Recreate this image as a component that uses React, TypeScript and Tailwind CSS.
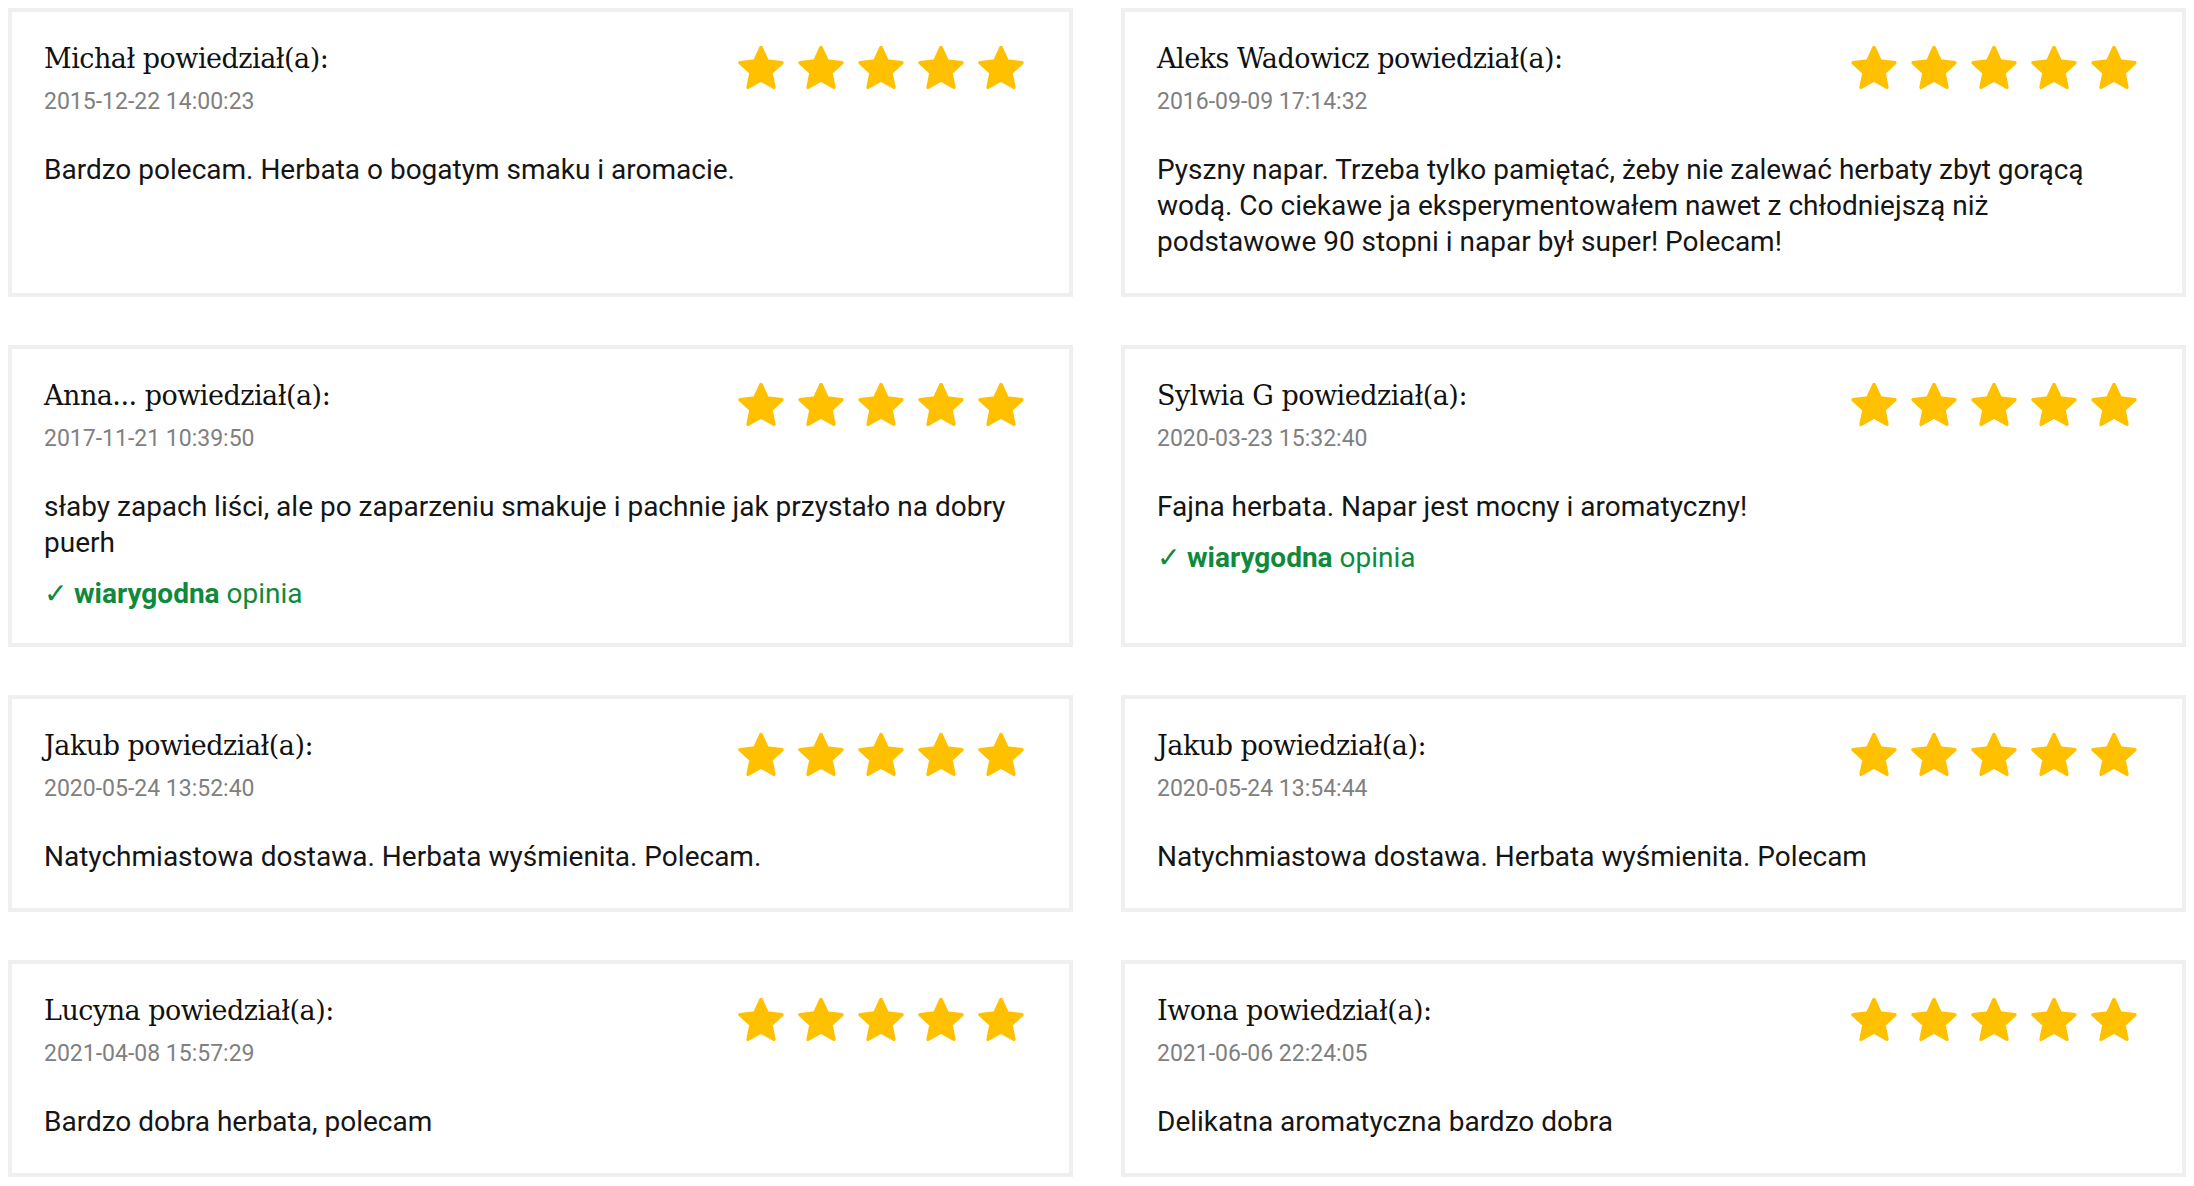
import React from "react";

type Review = {
  name: string;
  date: string;
  text: string;
  verified?: boolean;
};

const reviews: Review[] = [
  {
    name: "Michał",
    date: "2015-12-22 14:00:23",
    text: "Bardzo polecam. Herbata o bogatym smaku i aromacie.",
  },
  {
    name: "Aleks Wadowicz",
    date: "2016-09-09 17:14:32",
    text: "Pyszny napar. Trzeba tylko pamiętać, żeby nie zalewać herbaty zbyt gorącą wodą. Co ciekawe ja eksperymentowałem nawet z chłodniejszą niż podstawowe 90 stopni i napar był super! Polecam!",
  },
  {
    name: "Anna...",
    date: "2017-11-21 10:39:50",
    text: "słaby zapach liści, ale po zaparzeniu smakuje i pachnie jak przystało na dobry puerh",
    verified: true,
  },
  {
    name: "Sylwia G",
    date: "2020-03-23 15:32:40",
    text: "Fajna herbata. Napar jest mocny i aromatyczny!",
    verified: true,
  },
  {
    name: "Jakub",
    date: "2020-05-24 13:52:40",
    text: "Natychmiastowa dostawa. Herbata wyśmienita. Polecam.",
  },
  {
    name: "Jakub",
    date: "2020-05-24 13:54:44",
    text: "Natychmiastowa dostawa. Herbata wyśmienita. Polecam",
  },
  {
    name: "Lucyna",
    date: "2021-04-08 15:57:29",
    text: "Bardzo dobra herbata, polecam",
  },
  {
    name: "Iwona",
    date: "2021-06-06 22:24:05",
    text: "Delikatna aromatyczna bardzo dobra",
  },
];

// five-point star, rounded corners come from the round stroke join
const starPoints = Array.from({ length: 10 }, (_, i) => {
  const r = i % 2 === 0 ? 22 : 10.5;
  const a = (Math.PI / 5) * i - Math.PI / 2;
  return `${(24 + r * Math.cos(a)).toFixed(2)},${(25.5 + r * Math.sin(a)).toFixed(2)}`;
}).join(" ");

function Star() {
  return (
    <svg width="48" height="48" viewBox="0 0 48 48" className="block">
      <polygon
        points={starPoints}
        fill="#ffc000"
        stroke="#ffc000"
        strokeWidth="3.5"
        strokeLinejoin="round"
      />
    </svg>
  );
}

function ReviewCard({ review }: { review: Review }) {
  return (
    <div className="border-4 border-[#efefef] bg-white pt-8 pb-[33px] pl-[32px] pr-[44px]">
      <div className="flex items-start justify-between">
        <div>
          <div className="font-['DejaVu_Serif',serif] text-[27px] leading-[30px] tracking-[-0.5px] text-[#111]">
            {review.name} powiedział(a):
          </div>
          <div className="mt-[13px] font-['Roboto',sans-serif] text-[23px] leading-[30px] text-[#808080]">
            {review.date}
          </div>
        </div>
        <div className="flex gap-3">
          {[0, 1, 2, 3, 4].map((i) => (
            <Star key={i} />
          ))}
        </div>
      </div>
      <p className="mt-[35px] font-['Roboto',sans-serif] text-[28px] leading-[36px] text-[#151515]">
        {review.text}
      </p>
      {review.verified && (
        <div className="mt-[17px] font-['Roboto',sans-serif] text-[28px] leading-[32px] text-[#0f8a3c]">
          ✓ <span className="font-bold">wiarygodna</span> opinia
        </div>
      )}
    </div>
  );
}

export default function App() {
  return (
    <div className="min-h-screen bg-white p-2">
      <div className="grid grid-cols-2 gap-x-12 gap-y-12">
        {reviews.map((r, i) => (
          <ReviewCard key={i} review={r} />
        ))}
      </div>
    </div>
  );
}
